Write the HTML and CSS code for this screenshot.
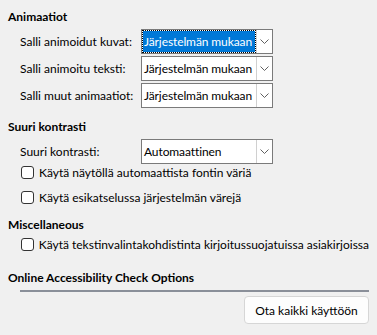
FILE: index.html
```html
<!DOCTYPE html>
<html lang="fi">
<head>
    <meta charset="UTF-8">
    <title>Esteettömyys</title>
    <link rel="stylesheet" href="styles.css">
</head>
<body>
    <div class="page">
        <div class="section">
            <div class="heading">Animaatiot</div>
            <div class="row">
                <span class="label">Salli animoidut kuvat:</span>
                <div class="combo focused"><span class="value">Järjestelmän mukaan</span><span class="arrow"><svg width="9" height="5" viewBox="0 0 9 5"><path d="M0.5 0.5 L4.5 4.5 L8.5 0.5" fill="none" stroke="#606060" stroke-width="1"/></svg></span></div>
            </div>
            <div class="row">
                <span class="label">Salli animoitu teksti:</span>
                <div class="combo"><span class="value">Järjestelmän mukaan</span><span class="arrow"><svg width="9" height="5" viewBox="0 0 9 5"><path d="M0.5 0.5 L4.5 4.5 L8.5 0.5" fill="none" stroke="#606060" stroke-width="1"/></svg></span></div>
            </div>
            <div class="row">
                <span class="label">Salli muut animaatiot:</span>
                <div class="combo"><span class="value">Järjestelmän mukaan</span><span class="arrow"><svg width="9" height="5" viewBox="0 0 9 5"><path d="M0.5 0.5 L4.5 4.5 L8.5 0.5" fill="none" stroke="#606060" stroke-width="1"/></svg></span></div>
            </div>
        </div>

        <div class="section">
            <div class="heading">Suuri kontrasti</div>
            <div class="row">
                <span class="label">Suuri kontrasti:</span>
                <div class="combo"><span class="value">Automaattinen</span><span class="arrow"><svg width="9" height="5" viewBox="0 0 9 5"><path d="M0.5 0.5 L4.5 4.5 L8.5 0.5" fill="none" stroke="#606060" stroke-width="1"/></svg></span></div>
            </div>
            <label class="check"><span class="box"></span>Käytä näytöllä automaattista fontin väriä</label>
            <label class="check"><span class="box"></span>Käytä esikatselussa järjestelmän värejä</label>
        </div>

        <div class="section misc">
            <div class="heading">Miscellaneous</div>
            <label class="check"><span class="box"></span>Käytä tekstinvalintakohdistinta kirjoitussuojatuissa asiakirjoissa</label>
        </div>

        <div class="section online">
            <div class="heading">Online Accessibility Check Options</div>
            <div class="rule"></div>
            <div class="actions">
                <button class="btn">Ota kaikki käyttöön</button>
            </div>
        </div>
    </div>
</body>
</html>
```

FILE: styles.css
```css
body {
    margin: 0;
    background-color: #f0f0f0;
    font-family: Lato, "Noto Sans", sans-serif;
    font-size: 12px;
    color: #000;
}
.page {
    padding: 8px 8px 0 8px;
}
.heading {
    font-weight: bold;
    height: 18px;
    line-height: 18px;
    white-space: nowrap;
}
.section {
    margin-bottom: 10px;
}
.section.misc {
    margin-top: -4px;
    margin-bottom: 12px;
}
.misc .heading + .check {
    margin-top: -2px;
}
.row {
    display: flex;
    align-items: center;
    padding-left: 12px;
    margin-top: 2px;
}
.heading + .row {
    margin-top: 3px;
}
.section .heading + .row + .check {
    margin-top: -4px;
}
.label {
    width: 121px;
    white-space: nowrap;
}
.combo {
    display: flex;
    box-sizing: border-box;
    width: 132px;
    height: 25px;
    border: 1px solid #7a7a7a;
    background-color: #fff;
}
.value {
    flex: 1;
    line-height: 21px;
    padding-left: 1px;
    margin: 1px;
    white-space: nowrap;
    overflow: hidden;
    letter-spacing: -0.1px;
}
.focused .value {
    background-color: #0078d7;
    color: #fff;
    outline: 1px dotted #000;
}
.arrow {
    width: 15px;
    border-left: 1px solid #d0d0d0;
    display: flex;
    align-items: center;
    justify-content: center;
}
.check {
    display: flex;
    align-items: center;
    padding-left: 13px;
    height: 25px;
    white-space: nowrap;
}
.box {
    width: 11px;
    height: 11px;
    border: 1px solid #333;
    border-radius: 3px;
    background-color: #fff;
    margin-right: 5px;
}
.rule {
    height: 2px;
    background-color: #8a8f99;
    margin: 3px 0 4px 12px;
}
.actions {
    display: flex;
    justify-content: flex-end;
}
.btn {
    font-family: inherit;
    font-size: 12px;
    width: 125px;
    height: 28px;
    background-color: #fdfdfd;
    border: 1px solid #d6d6d6;
    border-radius: 4px;
    color: #000;
}
```
